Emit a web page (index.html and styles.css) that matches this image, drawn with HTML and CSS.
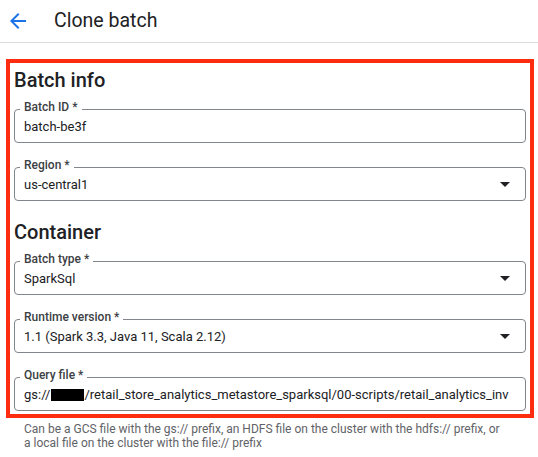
FILE: index.html
```html
<!DOCTYPE html>
<html>
<head>
<meta charset="utf-8">
<link rel="stylesheet" href="styles.css">
</head>
<body>
<header class="topbar">
  <svg class="back" viewBox="0 0 24 24" width="24" height="24"><path d="M20 11H7.830l5.59-5.59L12 4l-8 8 8 8 1.41-1.41L7.83 13H20v-2z"/></svg>
  <h1 class="title">Clone batch</h1>
</header>
<main class="content">
  <section class="highlight">
    <h2 class="section-title">Batch info</h2>
    <div class="field">
      <span class="label">Batch ID *</span>
      <span class="value">batch-be3f</span>
    </div>
    <div class="field">
      <span class="label">Region *</span>
      <span class="value">us-central1</span>
      <svg class="drop" viewBox="0 0 24 24" width="24" height="24"><path d="M7 10l5 5 5-5z"/></svg>
    </div>
    <h2 class="section-title">Container</h2>
    <div class="field">
      <span class="label">Batch type *</span>
      <span class="value">SparkSql</span>
      <svg class="drop" viewBox="0 0 24 24" width="24" height="24"><path d="M7 10l5 5 5-5z"/></svg>
    </div>
    <div class="field">
      <span class="label">Runtime version *</span>
      <span class="value">1.1 (Spark 3.3, Java 11, Scala 2.12)</span>
      <svg class="drop" viewBox="0 0 24 24" width="24" height="24"><path d="M7 10l5 5 5-5z"/></svg>
    </div>
    <div class="field">
      <span class="label">Query file *</span>
      <span class="value">gs://<span class="redact"></span>/retail_store_analytics_metastore_sparksql/00-scripts/retail_analytics_inv</span>
    </div>
  </section>
  <p class="hint">Can be a GCS file with the gs:// prefix, an HDFS file on the cluster with the hdfs:// prefix, or a local file on the cluster with the file:// prefix</p>
</main>
</body>
</html>
```

FILE: styles.css
```css
html, body {
  margin: 0;
  padding: 0;
  background: #ffffff;
}
body {
  font-family: Roboto, "Liberation Sans", Arial, sans-serif;
  color: #202124;
  width: 538px;
  overflow: hidden;
}
.topbar {
  height: 42px;
  border-bottom: 1px solid #dadce0;
  display: flex;
  align-items: center;
  box-sizing: content-box;
}
.back {
  fill: #1a73e8;
  margin-left: 6px;
  flex: none;
}
.title {
  margin: 0 0 0 24px;
  font-size: 19.5px;
  font-weight: 400;
  line-height: 24px;
  color: #202124;
}
.content {
  padding: 16px 4px 0 6px;
}
.highlight {
  border: 4px solid #ff2d0f;
  padding: 5px 4px 3px 4px;
  display: flex;
  flex-direction: column;
  gap: 24px;
}
.section-title {
  margin: 0 0 -7px 0;
  font-size: 20px;
  font-weight: 500;
  line-height: 24px;
  color: #202124;
}
.field + .section-title {
  margin-top: -5px;
}
.field {
  position: relative;
  height: 34px;
  box-sizing: border-box;
  border: 1px solid #80868b;
  border-radius: 4px;
  display: flex;
  align-items: center;
  padding: 0 8px 0 9px;
}
.label {
  position: absolute;
  left: 5px;
  top: -9px;
  padding: 0 4px;
  background: #ffffff;
  font-size: 12px;
  font-weight: 500;
  line-height: 12px;
  color: #3c4043;
}
.value {
  flex: 1;
  min-width: 0;
  font-size: 13px;
  line-height: 16px;
  white-space: nowrap;
  overflow: hidden;
  color: #202124;
  padding-top: 1px;
}
.redact {
  display: inline-block;
  width: 33px;
  height: 12px;
  background: #000000;
  vertical-align: -2px;
  margin-left: 1px;
}
.drop {
  fill: #202124;
  flex: none;
}
.hint {
  margin: 4px 0 0 0;
  padding: 0 32px 0 18px;
  font-size: 12px;
  line-height: 14px;
  color: #5f6368;
}
```
